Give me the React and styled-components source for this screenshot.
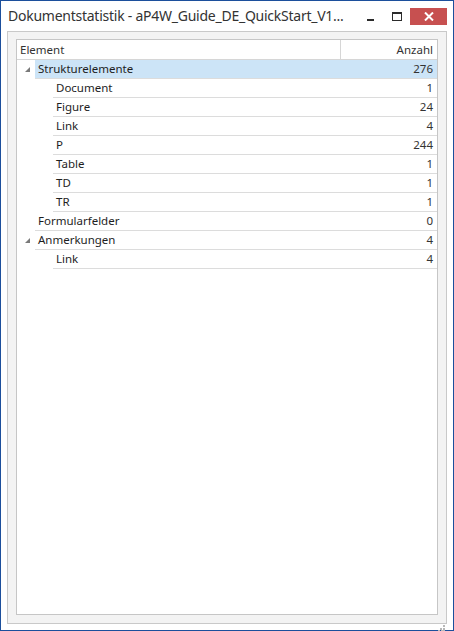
import React from "react";
import styled, { createGlobalStyle } from "styled-components";

const Global = createGlobalStyle`
  html, body {
    margin: 0;
    padding: 0;
    background: #ffffff;
  }
  * {
    box-sizing: border-box;
  }
`;

const Window = styled.div`
  width: 454px;
  height: 631px;
  border: 1px solid #1c4f9c;
  background: #ffffff;
  display: flex;
  flex-direction: column;
  font-family: "Noto Sans", "Open Sans", sans-serif;
  color: #1e1e1e;
`;

const TitleBar = styled.div`
  height: 30px;
  display: flex;
  align-items: flex-start;
  flex-shrink: 0;
`;

const Title = styled.div`
  flex: 1;
  padding: 5px 0 0 7px;
  font-size: 14px;
  letter-spacing: -0.25px;
  color: #333333;
  white-space: nowrap;
  overflow: hidden;
`;

const Controls = styled.div`
  display: flex;
  align-items: flex-start;
  padding-top: 7px;
  padding-right: 6px;
`;

const CtrlButton = styled.div`
  width: ${(p) => p.$w}px;
  height: 17px;
  display: flex;
  align-items: center;
  justify-content: center;
  background: ${(p) => (p.$close ? "#c75050" : "transparent")};
`;

const Body = styled.div`
  flex: 1;
  display: flex;
  padding: 0 6px 6px 6px;
  min-height: 0;
`;

const Panel = styled.div`
  position: relative;
  flex: 1;
  display: flex;
  border: 1px solid #c9c9c9;
  background: #f3f3f3;
  padding: 7px 8px 8px 8px;
`;

const List = styled.div`
  flex: 1;
  border: 1px solid #c6c6c6;
  background: #ffffff;
  font-size: 11.5px;
  overflow: hidden;
`;

const Header = styled.div`
  display: flex;
  height: 20px;
  border-bottom: 1px solid #d6d6d6;
  color: #333333;
`;

const HeadCell = styled.div`
  display: flex;
  align-items: center;
  padding: 0 ${(p) => (p.$right ? "4px" : "3px")};
  ${(p) => (p.$right ? "width: 97px; justify-content: flex-end; border-left: 1px solid #d6d6d6;" : "flex: 1;")}
`;

const Row = styled.div`
  display: flex;
  align-items: stretch;
  height: 19px;
`;

const Expander = styled.div`
  width: ${(p) => p.$indent}px;
  flex-shrink: 0;
  display: flex;
  align-items: center;
  justify-content: flex-end;
  padding-right: 5px;
`;

const Cells = styled.div`
  flex: 1;
  display: flex;
  align-items: center;
  border-bottom: 1px solid #dcdcdc;
  background: ${(p) => (p.$selected ? "#cce4f7" : "transparent")};
  padding: 0 4px 1px 3px;
`;

const Name = styled.span`
  flex: 1;
  white-space: nowrap;
`;

const Count = styled.span`
  color: #333333;
`;

const Grip = styled.div`
  position: absolute;
  right: 1px;
  bottom: 1px;
  width: 7px;
  height: 7px;
`;

const rows = [
  { name: "Strukturelemente", count: 276, level: 0, open: true, selected: true },
  { name: "Document", count: 1, level: 1 },
  { name: "Figure", count: 24, level: 1 },
  { name: "Link", count: 4, level: 1 },
  { name: "P", count: 244, level: 1 },
  { name: "Table", count: 1, level: 1 },
  { name: "TD", count: 1, level: 1 },
  { name: "TR", count: 1, level: 1 },
  { name: "Formularfelder", count: 0, level: 0 },
  { name: "Anmerkungen", count: 4, level: 0, open: true },
  { name: "Link", count: 4, level: 1 },
];

const Triangle = () => (
  <svg width="5" height="5" viewBox="0 0 5 5">
    <polygon points="5,0 5,5 0,5" fill="#7a7a7a" />
  </svg>
);

export default function App() {
  return (
    <>
      <Global />
      <Window>
        <TitleBar>
          <Title>Dokumentstatistik - aP4W_Guide_DE_QuickStart_V1...</Title>
          <Controls>
            <CtrlButton $w={27}>
              <svg width="8" height="8" viewBox="0 0 8 8">
                <rect x="1" y="6" width="7" height="2" fill="#2b2b2b" />
              </svg>
            </CtrlButton>
            <CtrlButton $w={27}>
              <svg width="10" height="9" viewBox="0 0 10 9">
                <rect x="0.5" y="0.5" width="9" height="8" fill="none" stroke="#2b2b2b" />
                <rect x="0" y="0" width="10" height="2" fill="#2b2b2b" />
              </svg>
            </CtrlButton>
            <CtrlButton $w={37} $close>
              <svg width="10" height="9" viewBox="0 0 10 9">
                <path d="M1 0.5 L9 8.5 M9 0.5 L1 8.5" stroke="#ffffff" strokeWidth="2" />
              </svg>
            </CtrlButton>
          </Controls>
        </TitleBar>
        <Body>
          <Panel>
            <List>
              <Header>
                <HeadCell>Element</HeadCell>
                <HeadCell $right>Anzahl</HeadCell>
              </Header>
              {rows.map((r, i) => (
                <Row key={i}>
                  <Expander $indent={r.level === 0 ? 18 : 36}>
                    {r.open ? <Triangle /> : null}
                  </Expander>
                  <Cells $selected={r.selected}>
                    <Name>{r.name}</Name>
                    <Count>{r.count}</Count>
                  </Cells>
                </Row>
              ))}
            </List>
            <Grip>
              <svg width="7" height="7" viewBox="0 0 7 7">
                <rect x="5" y="0" width="2" height="2" fill="#b8b8b8" />
                <rect x="2" y="3" width="2" height="2" fill="#b8b8b8" />
                <rect x="5" y="3" width="2" height="2" fill="#b8b8b8" />
                <rect x="0" y="5" width="2" height="2" fill="#b8b8b8" />
                <rect x="3" y="5" width="2" height="2" fill="#b8b8b8" />
                <rect x="5" y="5" width="2" height="2" fill="#b8b8b8" />
              </svg>
            </Grip>
          </Panel>
        </Body>
      </Window>
    </>
  );
}
